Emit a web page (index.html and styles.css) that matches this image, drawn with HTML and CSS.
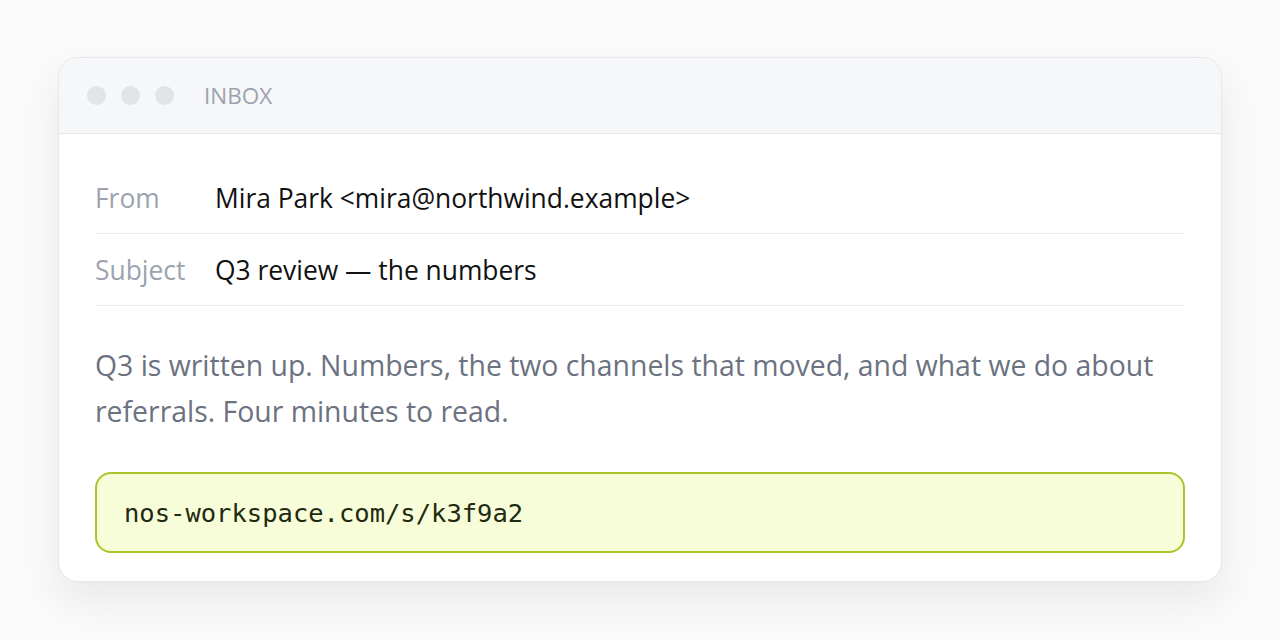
FILE: index.html
```html
<!DOCTYPE html>
<html lang="en">
<head>
<meta charset="utf-8">
<link rel="stylesheet" href="styles.css">
</head>
<body>
<div class="stage">
  <div class="card">
    <div class="titlebar">
      <div class="dots"><span class="dot"></span><span class="dot"></span><span class="dot"></span></div>
      <div class="title">INBOX</div>
    </div>
    <div class="content">
      <div class="row"><div class="label">From</div><div class="value">Mira Park &lt;mira@northwind.example&gt;</div></div>
      <div class="row"><div class="label">Subject</div><div class="value">Q3 review — the numbers</div></div>
      <p class="body">Q3 is written up. Numbers, the two channels that moved, and what we do about referrals. Four minutes to read.</p>
      <div class="link">nos-workspace.com/s/k3f9a2</div>
    </div>
  </div>
</div>
</body>
</html>
```
FILE: styles.css
```css
html, body { margin: 0; padding: 0; }
body {
  width: 1280px; height: 640px; overflow: hidden;
  background: #fafafa;
  font-family: "Open Sans", "Noto Sans", sans-serif;
}
.stage { padding: 57px 58px 0 58px; }
.card {
  background: #fff;
  border: 1px solid #e5e7eb;
  border-radius: 20px;
  overflow: hidden;
  box-shadow: 0 18px 40px rgba(0,0,0,0.07);
}
.titlebar {
  height: 75px;
  background: #f6f7f9;
  border-bottom: 1px solid #e5e7eb;
  display: flex; align-items: center;
  padding-left: 28px;
  gap: 30px;
}
.dots { display: flex; gap: 15px; }
.dot { width: 19px; height: 19px; border-radius: 50%; background: #e2e4e7; display: block; }
.title { font-size: 22.5px; color: #9ca3af; }
.content { padding: 28px 36px 28px 36px; }
.row {
  display: flex; align-items: center;
  height: 71px;
  border-bottom: 1px solid #eceef1;
  font-size: 26.4px;
}
.label { width: 120px; color: #9ca3af; }
.value { color: #111; }
.body {
  margin: 36px 0 38px 0;
  font-size: 28.4px; line-height: 46px;
  color: #6b7280;
}
.link {
  border: 2px solid #a8c52a;
  background: #f7fdd9;
  border-radius: 16px;
  height: 77px;
  display: flex; align-items: center;
  padding-left: 27px;
  font-family: "DejaVu Sans Mono", monospace;
  font-size: 25.5px;
  color: #1f2a10;
}
```
